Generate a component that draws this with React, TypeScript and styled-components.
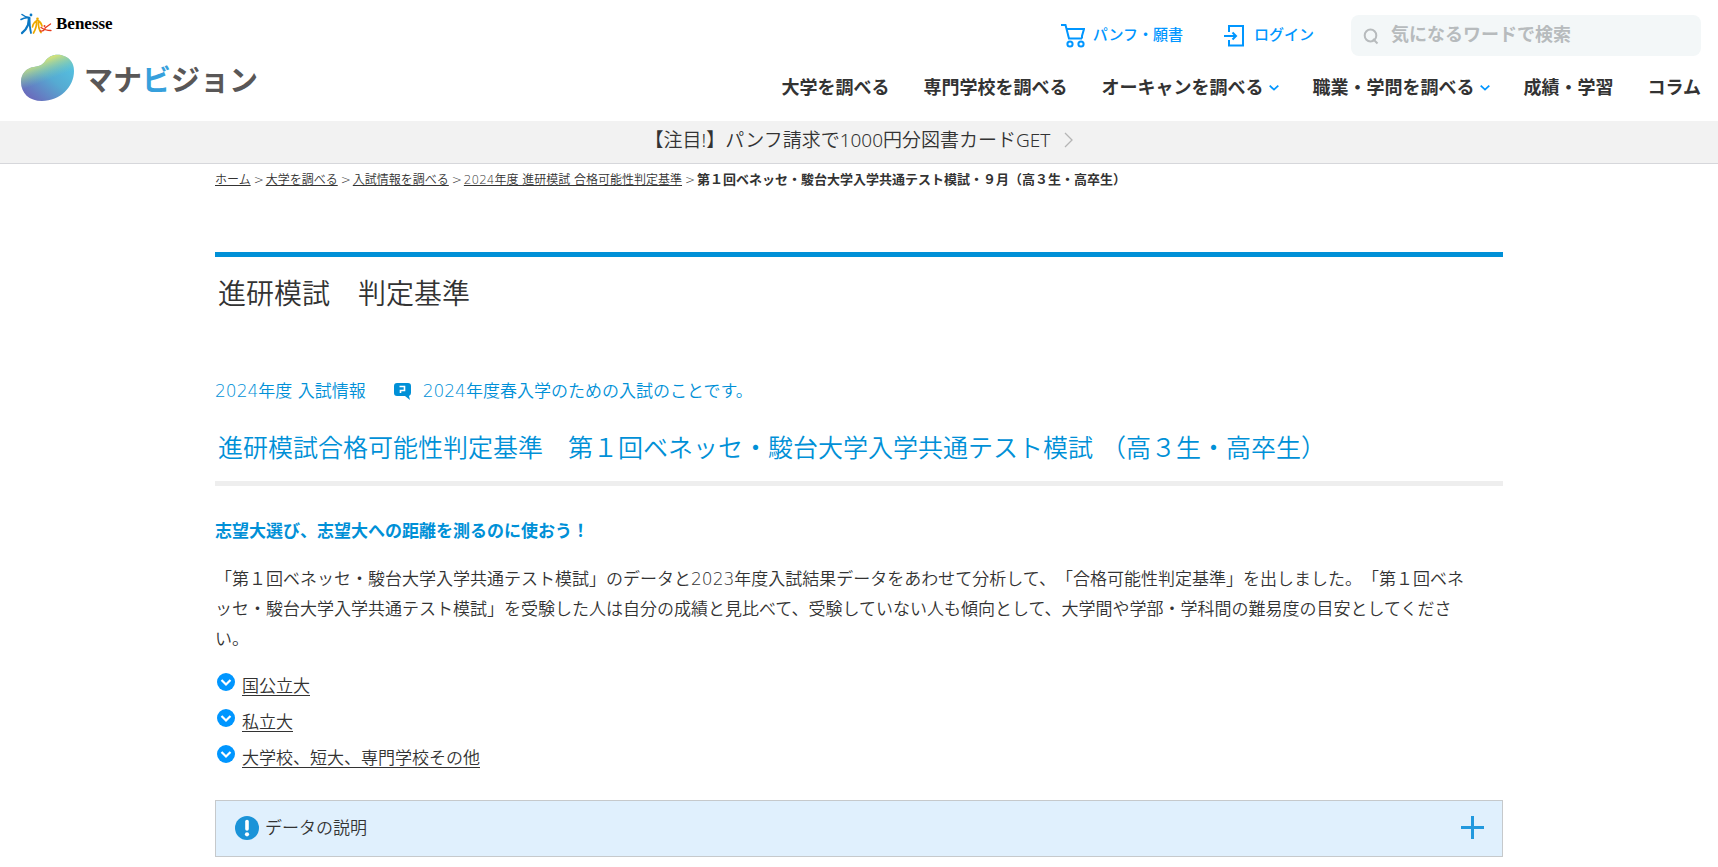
import React from "react";
import styled, { createGlobalStyle } from "styled-components";

const BLUE = "#0096ff";
const DEEP_BLUE = "#0090d7";

const GlobalStyle = createGlobalStyle`
  *, *::before, *::after { box-sizing: border-box; }
  body {
    margin: 0;
    background: #fff;
    color: #333;
    font-family: "DejaVu Sans", "Noto Sans CJK JP", sans-serif;
    font-size: 17px;
    line-height: 30px;
    text-spacing-trim: space-all;
  }
  a { color: inherit; }
  h1, h2, h3, p, ul, ol { margin: 0; padding: 0; font-size: inherit; font-weight: inherit; }
  ul, ol { list-style: none; }
  svg { display: block; flex: none; }
`;

const Header = styled.header`
  display: flex;
  justify-content: space-between;
  min-height: 121px;
  padding: 13px 17px 0 20px;
`;

const Brand = styled.div`
  display: flex;
  flex-direction: column;
  gap: 17px;
`;

const BenesseLink = styled.a`
  display: flex;
  align-items: center;
  gap: 3px;
  height: 22px;
  color: #000;
  font: bold 17px/26px "Liberation Serif", serif;
  text-decoration: none;
`;

const SiteLink = styled.a`
  display: flex;
  align-items: center;
  gap: 10px;
  height: 50px;
  color: #595757;
  font-size: 29px;
  font-weight: 700;
  text-decoration: none;
`;

const SiteName = styled.span`
  padding-top: 8px;
`;

const Accent = styled.span`
  color: #36a0dc;
`;

const HeaderRight = styled.div`
  display: flex;
  flex-direction: column;
  align-items: flex-end;
  gap: 17px;
`;

const Tools = styled.div`
  display: flex;
  align-items: center;
  margin-top: 2px;
`;

const ToolLink = styled.a<{ $gap: number; $after: number }>`
  display: flex;
  align-items: center;
  gap: ${(p) => p.$gap}px;
  margin-right: ${(p) => p.$after}px;
  color: ${BLUE};
  font-size: 15px;
  font-weight: 500;
  text-decoration: none;
`;

const ToolLabel = styled.span`
  padding-bottom: 2px;
`;

const Search = styled.label`
  display: flex;
  align-items: center;
  gap: 12px;
  width: 350px;
  height: 41px;
  padding: 0 12px;
  border-radius: 8px;
  background: #f3f7f8;
`;

const SearchInput = styled.input`
  flex: 1;
  min-width: 0;
  height: 32px;
  padding: 0 0 2px;
  border: 0;
  outline: 0;
  background: none;
  color: #333;
  font: 700 18px/30px "DejaVu Sans", "Noto Sans CJK JP", sans-serif;
  &::placeholder { color: #b7bbbd; opacity: 1; }
`;

const Nav = styled.nav`
  display: flex;
  gap: 34px;
`;

const NavLink = styled.a`
  display: flex;
  align-items: center;
  gap: 5px;
  font-size: 18px;
  font-weight: 700;
  text-decoration: none;
  white-space: nowrap;
`;

const Notice = styled.a`
  display: flex;
  align-items: center;
  justify-content: center;
  gap: 14px;
  height: 43px;
  padding-bottom: 4px;
  border-bottom: 1px solid #d6d7db;
  background: #f2f2f2;
  font-family: "Noto Sans", "Noto Sans CJK JP", sans-serif;
  font-size: 19px;
  font-weight: 350;
  text-decoration: none;
`;

const Main = styled.main`
  max-width: 1288px;
  margin: 0 auto;
  font-weight: 350;
`;

const Crumbs = styled.ol`
  display: flex;
  align-items: center;
  padding-top: 1px;
  font-size: 12px;
`;

const Crumb = styled.li`
  &:not(:last-child)::after {
    content: ">";
    margin: 0 2px 0 3px;
  }
  &:last-child {
    font-size: 13px;
    font-weight: 700;
  }
`;

const PageTitle = styled.h1`
  margin-top: 57px;
  padding: 17px 3px 15px;
  border-top: 5px solid ${DEEP_BLUE};
  font-size: 28px;
  line-height: 42px;
`;

const YearNote = styled.p`
  display: flex;
  align-items: center;
  gap: 28px;
  margin-top: 45px;
  color: ${DEEP_BLUE};
`;

const NoteText = styled.span`
  display: flex;
  align-items: center;
  gap: 12px;
`;

const SectionTitle = styled.h2`
  margin-top: 23px;
  padding: 0 3px 12px;
  border-bottom: 5px solid #eee;
  color: ${DEEP_BLUE};
  font-size: 25px;
  line-height: 40px;
`;

const Lead = styled.h3`
  margin-top: 30px;
  color: ${DEEP_BLUE};
  font-weight: 700;
`;

const Body = styled.p`
  margin-top: 18px;
`;

const JumpList = styled.ul`
  display: flex;
  flex-direction: column;
  gap: 6px;
  margin-top: 17px;
`;

const JumpItem = styled.li`
  display: flex;
  align-items: flex-start;
  gap: 7px;
  padding-left: 2px;
`;

const JumpLink = styled.a`
  text-underline-offset: 3px;
`;

const IconDrop = styled.span`
  padding-top: 2px;
`;

const Disclosure = styled.button`
  display: flex;
  align-items: center;
  gap: 5px;
  width: 100%;
  height: 57px;
  margin-top: 27px;
  padding: 0 18px 2px;
  border: 1px solid #c6c9cb;
  background: #e0f0fd;
  color: #333;
  font: inherit;
  text-align: left;
`;

const DisclosureLabel = styled.span`
  flex: 1;
`;

const BenesseMark = () => (
  <svg width="33" height="22" viewBox="0 0 33 22" fill="none" strokeLinecap="round">
    <g stroke="#0b78c4">
      <path d="M2 1.500 Q5 4 9.500 4.500 M1 6.500 Q5 4 9.500 5" strokeWidth="1.500" />
      <path d="M9 5 L8 12 Q6 17 2 20" strokeWidth="2.200" />
      <path d="M9.500 5 Q9.500 14 11 20" strokeWidth="1.800" />
    </g>
    <circle cx="11" cy="2" r="1.400" fill="#0b78c4" />
    <g stroke="#eda900" strokeWidth="1.700">
      <path d="M17 7.500 Q13 10 12.500 14 M18 7.500 Q21 9 22 13 M16.500 8 Q17 14 13.500 20 M18.500 9 Q18 15 21 19.500" />
    </g>
    <circle cx="17.500" cy="5.800" r="1.300" fill="#eda900" />
    <g stroke="#e83a1c" strokeWidth="1.300">
      <path d="M21 14.500 Q25 17.500 31 17.500 M25 16 Q23 18.500 20.500 18 M25 15 L30.500 11" />
    </g>
    <circle cx="24.500" cy="13" r="1" fill="#e83a1c" />
  </svg>
);

const BlobMark = () => (
  <svg width="54" height="48" viewBox="0 0 54 48">
    <defs>
      <linearGradient id="blobBase" x1="0.900" y1="0.200" x2="0.200" y2="0.950">
        <stop offset="0" stopColor="#54c0e0" />
        <stop offset="0.450" stopColor="#56aad2" />
        <stop offset="1" stopColor="#6a6cbc" />
      </linearGradient>
      <linearGradient id="blobGlow" x1="0.300" y1="0.100" x2="0.500" y2="0.550">
        <stop offset="0.150" stopColor="#cfe07c" />
        <stop offset="1" stopColor="#7fc8ae" stopOpacity="0" />
      </linearGradient>
    </defs>
    {["url(#blobBase)", "url(#blobGlow)"].map((fill) => (
      <path
        key={fill}
        fill={fill}
        d="M1 29 C1 21 6 15 14 14 C21 13 23 11 26 7 C30 2 36 1 41 2 C49 4 54 9 54 18 C54 34 40 48 22 48 C9 48 1 40 1 29 Z"
      />
    ))}
  </svg>
);

const CartIcon = () => (
  <svg width="24" height="24" viewBox="0 0 24 24" fill="none" stroke={BLUE} strokeWidth="2">
    <path d="M0 1 H4.500 L8 14.500 H21 M5.500 5 H23 L21 12 V14.500 M8 14.500 L7 11" />
    <circle cx="9" cy="20" r="2.600" />
    <circle cx="20" cy="20" r="2.600" />
  </svg>
);

const LoginIcon = () => (
  <svg width="21" height="22" viewBox="0 0 21 22" fill="none" stroke={BLUE} strokeWidth="2">
    <path d="M5 7 V1 H19 V20.500 H5 V15 M0 11 H12 M8.500 7.500 L12 11 L8.500 14.500" />
  </svg>
);

const SearchIcon = () => (
  <svg width="16" height="18" viewBox="0 0 16 18" fill="none" stroke="#b7bbbd" strokeWidth="2">
    <ellipse cx="7.500" cy="8.500" rx="5.800" ry="6" />
    <path d="M10 12 L14.500 16.500" />
  </svg>
);

const NavChevron = () => (
  <svg width="10" height="6" viewBox="0 0 10 6" fill="none" stroke={BLUE} strokeWidth="1.800">
    <path d="M0.700 0.700 L5 4.600 L9.300 0.700" />
  </svg>
);

const NoticeChevron = () => (
  <svg width="9" height="16" viewBox="0 0 9 16" fill="none" stroke="#b5b5b5" strokeWidth="1.300">
    <path d="M1 1 L8 8 L1 15" />
  </svg>
);

const NoteIcon = () => (
  <svg width="17" height="17" viewBox="0 0 17 17">
    <path d="M3 0 H14 Q17 0 17 3 V10 Q17 12 15 13 L16 17 L11 13 H3 Q0 13 0 10 V3 Q0 0 3 0 Z" fill={DEEP_BLUE} />
    <path d="M5.500 3.500 H10.500 V7.500 H6.500 V10" fill="none" stroke="#fff" strokeWidth="1.600" />
  </svg>
);

const JumpIcon = () => (
  <svg width="18" height="18" viewBox="0 0 18 18">
    <circle cx="9" cy="9" r="9" fill={BLUE} />
    <path d="M4.500 7 L9 11.500 L13.500 7" fill="none" stroke="#fff" strokeWidth="2.200" />
  </svg>
);

const AlertIcon = () => (
  <svg width="26" height="24" viewBox="0 0 26 24">
    <circle cx="13" cy="12" r="12" fill="#1a93d8" />
    <path d="M13 5.500 V13" stroke="#fff" strokeWidth="3.600" strokeLinecap="round" />
    <circle cx="13" cy="18.300" r="2.100" fill="#fff" />
  </svg>
);

const PlusIcon = () => (
  <svg width="23" height="23" viewBox="0 0 23 23" stroke="#2299de" strokeWidth="3">
    <path d="M0 11.500 H23 M11.500 0 V23" />
  </svg>
);

const navItems = [
  { label: "大学を調べる", menu: false },
  { label: "専門学校を調べる", menu: false },
  { label: "オーキャンを調べる", menu: true },
  { label: "職業・学問を調べる", menu: true },
  { label: "成績・学習", menu: false },
  { label: "コラム", menu: false },
];

const crumbs = ["ホーム", "大学を調べる", "入試情報を調べる", "2024年度 進研模試 合格可能性判定基準"];

const jumps = ["国公立大", "私立大", "大学校、短大、専門学校その他"];

export default function App() {
  return (
    <>
      <GlobalStyle />
      <Header>
        <Brand>
          <BenesseLink href="#">
            <BenesseMark />
            Benesse
          </BenesseLink>
          <SiteLink href="#">
            <BlobMark />
            <SiteName>
              マナ<Accent>ビ</Accent>ジョン
            </SiteName>
          </SiteLink>
        </Brand>
        <HeaderRight>
          <Tools>
            <ToolLink href="#" $gap={8} $after={41}>
              <CartIcon />
              <ToolLabel>パンフ・願書</ToolLabel>
            </ToolLink>
            <ToolLink href="#" $gap={9} $after={37}>
              <LoginIcon />
              <ToolLabel>ログイン</ToolLabel>
            </ToolLink>
            <Search>
              <SearchIcon />
              <SearchInput type="search" placeholder="気になるワードで検索" aria-label="検索" />
            </Search>
          </Tools>
          <Nav>
            {navItems.map((item) => (
              <NavLink href="#" key={item.label}>
                {item.label}
                {item.menu && <NavChevron />}
              </NavLink>
            ))}
          </Nav>
        </HeaderRight>
      </Header>
      <Notice href="#">
        【注目!】パンフ請求で1000円分図書カードGET
        <NoticeChevron />
      </Notice>
      <Main>
        <Crumbs>
          {crumbs.map((label) => (
            <Crumb key={label}>
              <a href="#">{label}</a>
            </Crumb>
          ))}
          <Crumb>第１回ベネッセ・駿台大学入学共通テスト模試・９月（高３生・高卒生）</Crumb>
        </Crumbs>
        <PageTitle>進研模試　判定基準</PageTitle>
        <YearNote>
          2024年度 入試情報
          <NoteText>
            <NoteIcon />
            2024年度春入学のための入試のことです。
          </NoteText>
        </YearNote>
        <SectionTitle>
          進研模試合格可能性判定基準　第１回ベネッセ・駿台大学入学共通テスト模試 （高３生・高卒生）
        </SectionTitle>
        <Lead>志望大選び、志望大への距離を測るのに使おう！</Lead>
        <Body>
          「第１回ベネッセ・駿台大学入学共通テスト模試」のデータと2023年度入試結果データをあわせて分析して、「合格可能性判定基準」を出しました。「第１回ベネ
          <br />
          ッセ・駿台大学入学共通テスト模試」を受験した人は自分の成績と見比べて、受験していない人も傾向として、大学間や学部・学科間の難易度の目安としてくださ
          <br />
          い。
        </Body>
        <JumpList>
          {jumps.map((label) => (
            <JumpItem key={label}>
              <IconDrop>
                <JumpIcon />
              </IconDrop>
              <JumpLink href="#">{label}</JumpLink>
            </JumpItem>
          ))}
        </JumpList>
        <Disclosure type="button" aria-expanded="false">
          <AlertIcon />
          <DisclosureLabel>データの説明</DisclosureLabel>
          <PlusIcon />
        </Disclosure>
      </Main>
    </>
  );
}
